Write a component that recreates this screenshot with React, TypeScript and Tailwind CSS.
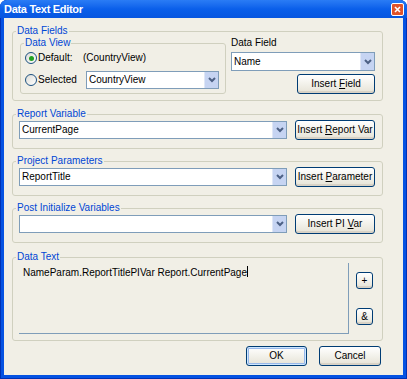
import type { ReactNode } from "react"

function Group({ label, className = "", children }: { label: string; className?: string; children?: ReactNode }) {
  return (
    <fieldset className={`border border-[#d0d0bf] rounded-[3px] ${className}`}>
      <legend className="ml-[3px] px-[1px] text-[#0046d5] leading-[12px]">{label}</legend>
      {children}
    </fieldset>
  )
}

function Chevron() {
  return (
    <svg width="8" height="6" viewBox="0 0 8 6">
      <polyline points="1,1 4,4 7,1" fill="none" stroke="#4d6185" strokeWidth="2" />
    </svg>
  )
}

function Select({ value = "", className = "" }: { value?: string; className?: string }) {
  return (
    <div className={`flex items-stretch border border-[#7f9db9] bg-white ${className}`}>
      <span className="flex-1 flex items-center pl-[2px] whitespace-nowrap overflow-hidden">{value}</span>
      <span className="w-[14px] bg-[#c6d4f2] border-l border-[#dfe7f7] flex items-center justify-center">
        <Chevron />
      </span>
    </div>
  )
}

function Btn({ children, className = "", def = false }: { children: ReactNode; className?: string; def?: boolean }) {
  return (
    <button
      type="button"
      className={`flex items-center justify-center rounded-[3px] border border-[#003c74] bg-linear-to-b from-white to-[#e6e3d6] whitespace-nowrap ${
        def ? "shadow-[inset_0_0_0_1px_#cee7ff,inset_0_0_0_2px_#98b8ea]" : "shadow-[inset_0_-2px_0_#d8d2c6]"
      } ${className}`}
    >
      <span>{children}</span>
    </button>
  )
}

function Radio({ checked = false }: { checked?: boolean }) {
  return (
    <span className="w-[12px] h-[12px] rounded-full border border-[#1c5180] bg-linear-to-br from-[#dcdcd7] to-white flex items-center justify-center">
      {checked && <span className="w-[5px] h-[5px] rounded-full bg-[#21a121]" />}
    </span>
  )
}

export default function App() {
  return (
    <div className="w-[407px] h-[379px] flex flex-col rounded-t-[7px] bg-[#0552e2] shadow-[inset_0_0_0_1px_#0031b5] font-['Liberation_Sans',Arial,sans-serif] text-[10px] leading-[12px] text-black overflow-hidden">
      {/* title bar */}
      <div className="h-[18px] flex items-center justify-between pl-[4px] pr-[3px] bg-linear-to-b from-[#2a7cf5] via-[#0a5fea] to-[#0756e0]">
        <span className="text-white font-bold text-[11px] tracking-[-0.3px]">Data Text Editor</span>
        <span className="w-[13px] h-[13px] rounded-[2px] border border-white bg-[#e0532b] flex items-center justify-center">
          <svg width="7" height="7" viewBox="0 0 7 7">
            <path d="M1 1L6 6M6 1L1 6" stroke="white" strokeWidth="1.6" />
          </svg>
        </span>
      </div>

      <div className="flex-1 mx-[4px] mb-[4px] bg-[#f1efe6] flex flex-col pl-[8px] pr-[20px] pt-[7px]">
        <Group label="Data Fields" className="h-[76px]">
          <div className="flex pl-[7px]">
            <Group label="Data View" className="w-[206px] h-[57px]">
              <div className="flex flex-col pl-[4px] pt-[1px]">
                <div className="h-[16px] flex items-center">
                  <Radio checked />
                  <span className="ml-[1px] w-[45px]">Default:</span>
                  <span>(CountryView)</span>
                </div>
                <div className="h-[18px] mt-[5px] flex items-center">
                  <Radio />
                  <span className="ml-[1px] w-[48px]">Selected</span>
                  <Select value="CountryView" className="w-[133px] h-[18px]" />
                </div>
              </div>
            </Group>
            <div className="ml-[5px] w-[144px] flex flex-col">
              <span>Data Field</span>
              <Select value="Name" className="mt-[3px] h-[19px]" />
              <Btn className="mt-[3px] self-end w-[78px] h-[20px]">
                Insert <u>F</u>ield
              </Btn>
            </div>
          </div>
        </Group>

        <Group label="Report Variable" className="mt-[7px] h-[41px]">
          <div className="flex items-center pl-[6px] h-[20px]">
            <Select value="CurrentPage" className="w-[268px] h-[18px]" />
            <Btn className="ml-[8px] w-[80px] h-[20px]">
              Insert <u>R</u>eport Var
            </Btn>
          </div>
        </Group>

        <Group label="Project Parameters" className="mt-[6px] h-[41px]">
          <div className="flex items-center pl-[6px] h-[20px]">
            <Select value="ReportTitle" className="w-[268px] h-[18px]" />
            <Btn className="ml-[8px] w-[80px] h-[20px]">
              Insert <u>P</u>arameter
            </Btn>
          </div>
        </Group>

        <Group label="Post Initialize Variables" className="mt-[6px] h-[41px]">
          <div className="flex items-center pl-[6px] h-[20px]">
            <Select className="w-[268px] h-[18px]" />
            <Btn className="ml-[8px] w-[80px] h-[20px]">
              Insert PI <u>V</u>ar
            </Btn>
          </div>
        </Group>

        <Group label="Data Text" className="mt-[8px] h-[90px]">
          <div className="flex pl-[6px]">
            <div className="w-[330px] h-[71px] border-r border-b border-[#7f9db9] pl-[4px] pt-[4px] flex items-start">
              <span>NameParam.ReportTitlePIVar Report.CurrentPage</span>
              <span className="w-[1px] h-[11px] bg-black -mt-[1px]" />
            </div>
            <div className="ml-[7px] flex flex-col">
              <Btn className="mt-[9px] w-[17px] h-[17px]">+</Btn>
              <Btn className="mt-[19px] w-[17px] h-[17px]">&amp;</Btn>
            </div>
          </div>
        </Group>

        <div className="flex justify-end gap-[12px] mt-[5px] pr-[2px]">
          <Btn def className="w-[61px] h-[20px]">OK</Btn>
          <Btn className="w-[62px] h-[20px]">Cancel</Btn>
        </div>
      </div>
    </div>
  )
}
